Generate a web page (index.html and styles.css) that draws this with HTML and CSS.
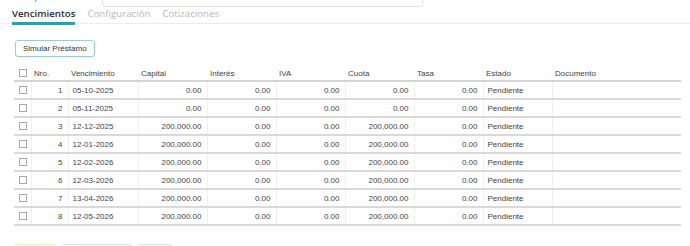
FILE: index.html
```html
<!DOCTYPE html>
<html lang="es">
<head>
<meta charset="utf-8">
<title>Vencimientos</title>
<link rel="stylesheet" href="styles.css">
</head>
<body>
<div class="descrow">
  <span class="desclabel">Descripción</span>
  <div class="descinput">Préstamo hipotecario a largo plazo 2025</div>
</div>
<nav class="tabs">
  <span class="tab active">Vencimientos</span>
  <span class="tab">Configuración</span>
  <span class="tab">Cotizaciones</span>
</nav>
<div class="toolbar">
  <button class="btn">Simular Préstamo</button>
</div>
<table class="grid">
  <colgroup>
    <col class="c-chk"><col class="c-nro"><col class="c-venc"><col class="c-num"><col class="c-num"><col class="c-num"><col class="c-num"><col class="c-num"><col class="c-est"><col class="c-doc">
  </colgroup>
  <thead>
    <tr><th><span class="cb"></span></th><th>Nro.</th><th>Vencimiento</th><th>Capital</th><th>Interés</th><th>IVA</th><th>Cuota</th><th>Tasa</th><th>Estado</th><th>Documento</th></tr>
  </thead>
  <tbody>
    <tr><td><span class="cb"></span></td><td class="r">1</td><td>05-10-2025</td><td class="r">0.00</td><td class="r">0.00</td><td class="r">0.00</td><td class="r">0.00</td><td class="r">0.00</td><td>Pendiente</td><td></td></tr>
    <tr><td><span class="cb"></span></td><td class="r">2</td><td>05-11-2025</td><td class="r">0.00</td><td class="r">0.00</td><td class="r">0.00</td><td class="r">0.00</td><td class="r">0.00</td><td>Pendiente</td><td></td></tr>
    <tr><td><span class="cb"></span></td><td class="r">3</td><td>12-12-2025</td><td class="r">200,000.00</td><td class="r">0.00</td><td class="r">0.00</td><td class="r">200,000.00</td><td class="r">0.00</td><td>Pendiente</td><td></td></tr>
    <tr><td><span class="cb"></span></td><td class="r">4</td><td>12-01-2026</td><td class="r">200,000.00</td><td class="r">0.00</td><td class="r">0.00</td><td class="r">200,000.00</td><td class="r">0.00</td><td>Pendiente</td><td></td></tr>
    <tr><td><span class="cb"></span></td><td class="r">5</td><td>12-02-2026</td><td class="r">200,000.00</td><td class="r">0.00</td><td class="r">0.00</td><td class="r">200,000.00</td><td class="r">0.00</td><td>Pendiente</td><td></td></tr>
    <tr><td><span class="cb"></span></td><td class="r">6</td><td>12-03-2026</td><td class="r">200,000.00</td><td class="r">0.00</td><td class="r">0.00</td><td class="r">200,000.00</td><td class="r">0.00</td><td>Pendiente</td><td></td></tr>
    <tr><td><span class="cb"></span></td><td class="r">7</td><td>13-04-2026</td><td class="r">200,000.00</td><td class="r">0.00</td><td class="r">0.00</td><td class="r">200,000.00</td><td class="r">0.00</td><td>Pendiente</td><td></td></tr>
    <tr><td><span class="cb"></span></td><td class="r">8</td><td>12-05-2026</td><td class="r">200,000.00</td><td class="r">0.00</td><td class="r">0.00</td><td class="r">200,000.00</td><td class="r">0.00</td><td>Pendiente</td><td></td></tr>
  </tbody>
</table>
<div class="footer">
  <span class="fbtn f1"></span>
  <span class="fbtn f2"></span>
  <span class="fbtn f3"></span>
</div>
</body>
</html>
```
FILE: styles.css
```css
html, body {
  margin: 0;
  padding: 0;
  background: #ffffff;
}
body {
  width: 690px;
  height: 246px;
  overflow: hidden;
  font-family: "Liberation Sans", Arial, sans-serif;
  color: #333;
}
.descrow {
  display: flex;
  align-items: flex-end;
  height: 7px;
  overflow: hidden;
}
.desclabel {
  width: 90px;
  padding-left: 12px;
  font-size: 8px;
  line-height: 10px;
  margin-bottom: 4px;
  color: #666;
}
.descinput {
  box-sizing: border-box;
  width: 321px;
  height: 22px;
  flex: none;
  border: 1px solid #e2e2e2;
  border-radius: 3px;
  box-shadow: 0 1px 1px rgba(0,0,0,0.05);
  font-size: 8px;
  line-height: 10px;
  padding: 4px 10px 6px;
  color: #aaa;
  display: flex;
  align-items: flex-end;
}
.tabs {
  display: flex;
  gap: 12px;
  padding-left: 12px;
  height: 16px;
  border-bottom: 1px solid #ececec;
}
.tab {
  font-family: "Open Sans", "Noto Sans", sans-serif;
  font-size: 9.7px;
  line-height: 14px;
  height: 15px;
  color: #b8b8b8;
  box-sizing: border-box;
}
.tab.active {
  color: #2b2b2b;
  font-weight: 600;
  border-bottom: 3px solid #1aa6b4;
  height: 18px;
}
.toolbar {
  padding: 16px 0 0 15px;
  display: flex;
}
.btn {
  box-sizing: border-box;
  height: 17px;
  padding: 0 7px;
  background: #fff;
  border: 1px solid #8ad6d4;
  border-radius: 3px;
  font-family: "Liberation Sans", Arial, sans-serif;
  font-size: 8px;
  color: #333;
  box-shadow: 0 1px 1px rgba(0,0,0,0.06);
}
.grid {
  margin: 9px 0 0 14px;
  width: 664px;
  border-collapse: collapse;
  table-layout: fixed;
  font-size: 8px;
  color: #444;
}
.c-chk { width: 17px; }
.c-nro { width: 37px; }
.c-venc { width: 70px; }
.c-num { width: 69px; }
.c-est { width: 69px; }
.c-doc { width: 129px; }
.grid th {
  font-weight: normal;
  text-align: left;
  height: 14px;
  padding: 0 3px;
  color: #444;
  border-bottom: 2px solid #d4d4d4;
  white-space: nowrap;
}
.grid td {
  height: 16px;
  padding: 0 4px;
  border-bottom: 2px solid #d9d9d9;
  border-left: 1px solid #f0f0f0;
  white-space: nowrap;
}
.grid td:first-child { border-left: none; }
.grid th:first-child, .grid td:first-child { padding: 0 0 0 5px; }
.grid td.r { text-align: right; padding-right: 5px; }
.cb {
  display: block;
  width: 6px;
  height: 6px;
  border: 1px solid #a8a8a8;
  background: #fff;
}
.footer {
  display: flex;
  gap: 6px;
  padding: 18px 0 0 14px;
}
.fbtn {
  height: 8px;
  border-radius: 3px;
  border: 1px solid #c9ecec;
  background: #f4fcfb;
}
.f1 { width: 40px; border-color: #e7f0c8; }
.f2 { width: 68px; }
.f3 { width: 32px; }
```
